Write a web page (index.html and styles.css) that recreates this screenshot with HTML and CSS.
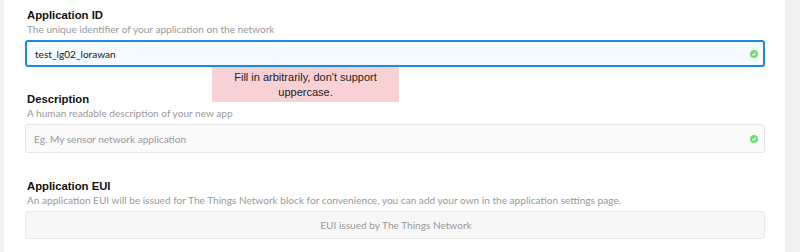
FILE: index.html
```html
<!doctype html>
<html lang="en">

<head>
    <meta charset="utf-8">
    <title>Add application</title>
    <meta name="viewport" content="width=device-width, initial-scale=1">
    <link rel="stylesheet" href="styles.css">
</head>

<body>
    <div class="gutter gutter-left"></div>
    <div class="content">
        <div class="field field-id">
            <label class="field-title">Application ID</label>
            <p class="field-help">The unique identifier of your application on the network</p>
            <div class="input input-focus">
                <span class="input-value">test_lg02_lorawan</span>
                <span class="check">
                    <svg width="8" height="8" viewBox="0 0 8 8">
                        <circle cx="4" cy="4" r="4" fill="#6fe06f"/>
                        <path d="M2.3 4.2 L3.5 5.3 L5.8 2.8" fill="none" stroke="#fff" stroke-width="1.1"/>
                    </svg>
                </span>
            </div>
            <div class="note">Fill in arbitrarily, don't support<br>uppercase.</div>
        </div>

        <div class="field">
            <label class="field-title">Description</label>
            <p class="field-help">A human readable description of your new app</p>
            <div class="input">
                <span class="input-placeholder">Eg. My sensor network application</span>
                <span class="check">
                    <svg width="8" height="8" viewBox="0 0 8 8">
                        <circle cx="4" cy="4" r="4" fill="#6fe06f"/>
                        <path d="M2.3 4.2 L3.5 5.3 L5.8 2.8" fill="none" stroke="#fff" stroke-width="1.1"/>
                    </svg>
                </span>
            </div>
        </div>

        <div class="field">
            <label class="field-title">Application EUI</label>
            <p class="field-help">An application EUI will be issued for The Things Network block for convenience, you can add your own in the application settings page.</p>
            <div class="input input-static">
                <span class="input-placeholder">EUI issued by The Things Network</span>
            </div>
        </div>
    </div>
    <div class="gutter gutter-right"></div>
</body>

</html>
```

FILE: styles.css
```css
* {
    box-sizing: border-box;
    margin: 0;
}

html,
body {
    height: 100%;
}

body {
    display: flex;
    background: #fff;
    font-family: Lato, "Open Sans", sans-serif;
}

.gutter {
    background: #f0f0f0;
}

.gutter-left {
    width: 4px;
}

.gutter-right {
    width: 15px;
}

.content {
    flex: 1;
    padding: 8px 20px 0 21px;
}

.field {
    margin-bottom: 26px;
}

.field-id {
    position: relative;
    margin-bottom: 25px;
}

.field-title {
    display: block;
    padding-left: 2px;
    font-family: "Liberation Sans", Arial, sans-serif;
    font-weight: 700;
    font-size: 11.3px;
    line-height: 14px;
    color: #111;
}

.field-help {
    padding-left: 2px;
    font-size: 10.1px;
    line-height: 14px;
    color: #999;
    margin-bottom: 4px;
}

.input {
    display: flex;
    align-items: center;
    justify-content: space-between;
    height: 29px;
    padding: 0 6px 0 8px;
    border: 1px solid #e6e6e6;
    border-radius: 3px;
    background: #fafafa;
    font-size: 10.1px;
}

.input-focus {
    border: 2px solid #1e88e5;
    background: #f5faff;
    height: 27px;
    padding-right: 5px;
}

.input-value {
    color: #1a1a1a;
}

.input-placeholder {
    color: #999;
}

.input-static {
    height: 28px;
    justify-content: center;
    background: #f7f7f7;
    border-color: #e8e8e8;
}

.check {
    display: flex;
}

.note {
    position: absolute;
    top: 59px;
    left: 187px;
    width: 187px;
    height: 35px;
    padding-top: 3px;
    background: #f8d1d4;
    color: #222;
    font-family: "Liberation Sans", Arial, sans-serif;
    font-size: 11px;
    line-height: 15px;
    text-align: center;
}
```
